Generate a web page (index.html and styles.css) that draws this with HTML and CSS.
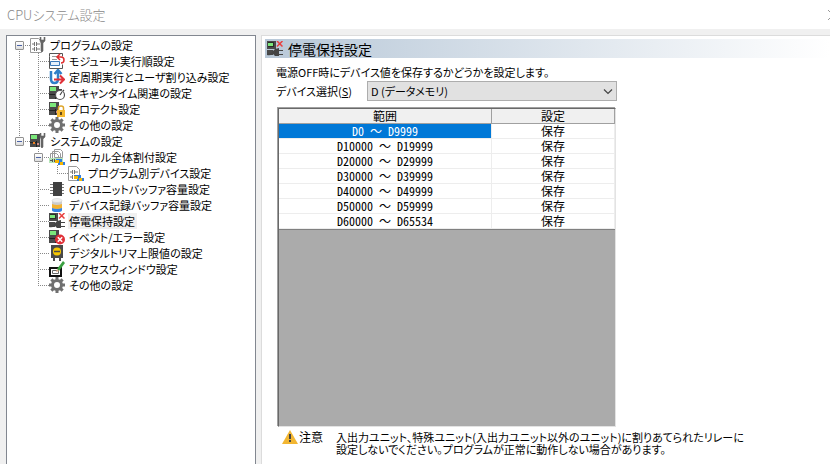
FILE: index.html
```html
<!DOCTYPE html>
<html lang="ja">
<head>
    <meta charset="UTF-8">
    <meta name="viewport" content="width=device-width, initial-scale=1.0">
    <title>CPUシステム設定</title>
    <link rel="stylesheet" href="styles.css">
</head>
<body>

    <!-- Shared icon parts -->
    <svg class="defs" width="0" height="0" aria-hidden="true">
        <symbol id="unit" viewBox="0 0 16 16">
            <path d="M0 1h10v13H0z" fill="#4a4a4a"/>
            <path d="M6 8h1v6H6zM0 9h6v1H0z" fill="#222"/>
            <path d="M1 2h6v4H1z" fill="#7be87b"/>
            <path d="M7 10h2v2H7z" fill="#c88"/>
        </symbol>
        <symbol id="wrench" viewBox="0 0 16 16">
            <path d="M10 0v4l1 2v8q1 2 2 0V6l2-2V0h-1v3h-3V0z" fill="#666" stroke="#666" stroke-width=".6"/>
        </symbol>
        <symbol id="ladder" viewBox="0 0 16 16">
            <path d="M.5 1.500h8l3 3v11H.5z" fill="#fff" stroke="#999"/>
            <path d="M2 7h2m3 0h3M4.500 5v4m2-4v4M2 12h2m3 0h3M4.500 10v4m2-4v4" fill="none" stroke="#777"/>
        </symbol>
        <symbol id="gear" viewBox="0 0 16 16">
            <path d="M6.500 0h3v2.200l1.500.6L12.600 1.300l2.100 2.100L13.200 5l.6 1.500H16v3h-2.200l-.6 1.500 1.500 1.600-2.100 2.100-1.600-1.500-1.500.6V16h-3v-2.200L5 13.200l-1.600 1.500-2.100-2.100L2.800 11l-.6-1.500H0v-3h2.200L2.800 5 1.300 3.400l2.100-2.100L5 2.800l1.500-.6zM8 5a3 3 0 1 0 0 6 3 3 0 0 0 0-6z" fill="#707070" fill-rule="evenodd"/>
        </symbol>
        <symbol id="flow" viewBox="0 0 16 16">
            <path d="M7 10h6v3h3v3H9v-3H7z" fill="#2f7fe0"/>
            <path d="M6 11h4v3H6zM11 13h3v3h-3z" fill="#f7b500"/>
        </symbol>
        <symbol id="power" viewBox="0 0 16 16">
            <path d="M0 0h9v8H0zM0 9h6v5H0z" fill="#4a4a4a"/>
            <path d="M1 1h6v5H1z" fill="#2c2c2c"/>
            <path d="M1 2h5v3H1z" fill="#7be87b"/>
            <path d="M10 0l5.500 5.500M15.500 0L10 5.500" stroke="#e84040" stroke-width="1.500"/>
            <path d="M0 13q4 0 6-3l2-2 4-1v2h4v1h-4v3h4v1h-4v1H8l-2-2q-3 2-6 1z" fill="#444"/>
        </symbol>
    </svg>

    <header class="titlebar">
        <h1>CPUシステム設定</h1>
        <button class="close" type="button" aria-label="閉じる">
            <svg viewBox="0 0 10 10"><path d="M0 0l10 10M10 0L0 10" stroke="#999"/></svg>
        </button>
    </header>

    <div class="content">
        <nav class="tree">
            <ul>
                <li>
                    <div class="row">
                        <button class="toggle" type="button" aria-label="折りたたむ"></button>
                        <svg class="icon" viewBox="0 0 16 16"><use href="#ladder"/><use href="#wrench"/></svg>
                        <span class="label">プログラムの設定</span>
                    </div>
                    <ul>
                        <li><div class="row">
                            <svg class="icon" viewBox="0 0 16 16">
                                <path d="M.5 3.500V.5h13v3m0 8v4H.5v-12" fill="#fff" stroke="#555"/>
                                <path d="M3 3.500h5m-5 3h5" stroke="#999"/>
                                <path d="M1.500 8.500h9v4h-9z" fill="#e5effa" stroke="#3b78b8"/>
                                <path d="M9 4h3q3 0 3 3t-3 3M11 1L8 4l3 3" fill="none" stroke="#e03030" stroke-width="1.500"/>
                            </svg>
                            <span class="label">モジュール実行順設定</span>
                        </div></li>
                        <li><div class="row">
                            <svg class="icon" viewBox="0 0 16 16">
                                <path d="M2 2v8q0 4 3.500 4T9 10V3M5.500 5L9 1l3.500 4" fill="none" stroke="#2f7fc8" stroke-width="2.500"/>
                                <path d="M5 10.500h10M11 6.500l4 4-4 4" fill="none" stroke="#e03038" stroke-width="2"/>
                            </svg>
                            <span class="label">定周期実行とユーザ割り込み設定</span>
                        </div></li>
                        <li><div class="row">
                            <svg class="icon" viewBox="0 0 16 16">
                                <use href="#unit"/>
                                <circle cx="11" cy="10" r="4.500" fill="#fff" stroke="#555" stroke-width="1.200"/>
                                <path d="M11 10l2-3M9 4.500h4M14 5l1 1" stroke="#444" stroke-width="1.200"/>
                            </svg>
                            <span class="label">スキャンタイム関連の設定</span>
                        </div></li>
                        <li><div class="row">
                            <svg class="icon" viewBox="0 0 16 16">
                                <use href="#unit"/>
                                <path d="M9.500 9V7q0-2 2.500-2t2.500 2v2" fill="none" stroke="#dda52a" stroke-width="1.500"/>
                                <path d="M8 9h8v7H8z" fill="#f5b82e"/>
                                <path d="M11 11h2v3h-2z" fill="#654b18"/>
                            </svg>
                            <span class="label">プロテクト設定</span>
                        </div></li>
                        <li><div class="row">
                            <svg class="icon" viewBox="0 0 16 16"><use href="#gear"/></svg>
                            <span class="label">その他の設定</span>
                        </div></li>
                    </ul>
                </li>
                <li>
                    <div class="row">
                        <button class="toggle" type="button" aria-label="折りたたむ"></button>
                        <svg class="icon" viewBox="0 0 16 16">
                            <use href="#unit"/>
                            <path d="M3 9h2v2H3z" fill="#f08020"/>
                            <use href="#wrench"/>
                        </svg>
                        <span class="label">システムの設定</span>
                    </div>
                    <ul>
                        <li>
                            <div class="row">
                                <button class="toggle" type="button" aria-label="折りたたむ"></button>
                                <svg class="icon" viewBox="0 0 16 16">
                                    <path d="M5.500.5h6l2 2v6h-8zM3.500 2.500h6l2 2v5h-8zM1.500 4.500h6l2 2v3h-8z" fill="#fff" stroke="#999"/>
                                    <path d="M0 9h14v5H0z" fill="#b5e5b8"/>
                                    <path d="M1 11.500h2m3 0h2M3.500 10v3m2-3v3" stroke="#555"/>
                                    <use href="#flow"/>
                                </svg>
                                <span class="label">ローカル全体割付設定</span>
                            </div>
                            <ul>
                                <li><div class="row">
                                    <svg class="icon" viewBox="0 0 16 16"><use href="#ladder"/><use href="#flow"/></svg>
                                    <span class="label">プログラム別デバイス設定</span>
                                </div></li>
                            </ul>
                        </li>
                        <li><div class="row">
                            <svg class="icon" viewBox="0 0 16 16">
                                <path d="M1 3.500h14M1 6.500h14M1 9.500h14M1 12.500h14" stroke="#777"/>
                                <path d="M4 1h9v14H4z" fill="#404040"/>
                            </svg>
                            <span class="label">CPUユニットバッファ容量設定</span>
                        </div></li>
                        <li><div class="row">
                            <svg class="icon" viewBox="0 0 16 16">
                                <path d="M3 3v10q0 2 5 2t5-2V3z" fill="#ccc"/>
                                <path d="M3 7q5 2 10 0v4q-5 2-10 0z" fill="#f2b233"/>
                                <path d="M3 11q5 2 10 0v2q0 2-5 2t-5-2z" fill="#3584e4"/>
                                <ellipse cx="8" cy="3.500" rx="5" ry="2" fill="#eee" stroke="#ccc" stroke-width=".5"/>
                            </svg>
                            <span class="label">デバイス記録バッファ容量設定</span>
                        </div></li>
                        <li><div class="row">
                            <svg class="icon" viewBox="0 0 16 16"><use href="#power"/></svg>
                            <span class="label selected">停電保持設定</span>
                        </div></li>
                        <li><div class="row">
                            <svg class="icon" viewBox="0 0 16 16">
                                <use href="#unit"/>
                                <circle cx="11" cy="10.500" r="5" fill="#e03038"/>
                                <path d="M8.800 8.300l4.400 4.400m0-4.400l-4.400 4.400" stroke="#fff" stroke-width="1.500"/>
                            </svg>
                            <span class="label">イベント/エラー設定</span>
                        </div></li>
                        <li><div class="row">
                            <svg class="icon" viewBox="0 0 16 16">
                                <path d="M2 0h12v13H2zM4 13h2v3H4zM10 13h2v3h-2z" fill="#4a4a4a"/>
                                <circle cx="8" cy="6.500" r="4" fill="#f8c800"/>
                                <path d="M5 6.500h6" stroke="#4a4a4a" stroke-width="1.500"/>
                            </svg>
                            <span class="label">デジタルトリマ上限値の設定</span>
                        </div></li>
                        <li><div class="row">
                            <svg class="icon" viewBox="0 0 16 16">
                                <path d="M1 7h11v8H1z" fill="#fff" stroke="#111" stroke-width="2"/>
                                <path d="M3.500 12.500h6v-3h-6z" fill="none" stroke="#666"/>
                                <path d="M8 8l6-8 2 2-6 8z" fill="#3aa040"/>
                                <path d="M7 11l1-3 2 2z" fill="#e0a888"/>
                            </svg>
                            <span class="label">アクセスウィンドウ設定</span>
                        </div></li>
                        <li><div class="row">
                            <svg class="icon" viewBox="0 0 16 16"><use href="#gear"/></svg>
                            <span class="label">その他の設定</span>
                        </div></li>
                    </ul>
                </li>
            </ul>
        </nav>

        <main class="panel">
            <h2 class="banner">
                <svg class="icon" viewBox="0 0 16 16"><use href="#power"/></svg>
                停電保持設定
            </h2>

            <div class="settings">
                <p class="description">電源OFF時にデバイス値を保存するかどうかを設定します。</p>

                <div class="field">
                    <label for="device">デバイス選択(<u>S</u>)</label>
                    <div class="select-box">
                        <select id="device" name="device">
                            <option>D (データメモリ)</option>
                        </select>
                        <svg class="chevron" viewBox="0 0 10 6"><path d="M1 .5l4 4 4-4" fill="none" stroke="#444" stroke-width="1.200"/></svg>
                    </div>
                </div>

                <div class="grid">
                    <table>
                        <thead>
                            <tr><th class="range">範囲</th><th>設定</th></tr>
                        </thead>
                        <tbody>
                            <tr><td class="current">D0 <span class="wave">～</span> D9999</td><td>保存</td></tr>
                            <tr><td>D10000 <span class="wave">～</span> D19999</td><td>保存</td></tr>
                            <tr><td>D20000 <span class="wave">～</span> D29999</td><td>保存</td></tr>
                            <tr><td>D30000 <span class="wave">～</span> D39999</td><td>保存</td></tr>
                            <tr><td>D40000 <span class="wave">～</span> D49999</td><td>保存</td></tr>
                            <tr><td>D50000 <span class="wave">～</span> D59999</td><td>保存</td></tr>
                            <tr><td>D60000 <span class="wave">～</span> D65534</td><td>保存</td></tr>
                        </tbody>
                    </table>
                </div>

                <div class="notice">
                    <svg class="icon" viewBox="0 0 16 16">
                        <path d="M8 1l8 14H0z" fill="#f2b632"/>
                        <path d="M7 5h2v5H7zM7 11h2v2H7z" fill="#444"/>
                    </svg>
                    <strong>注意</strong>
                    <p>入出力ユニット、特殊ユニット(入出力ユニット以外のユニット)に割りあてられたリレーに<br>設定しないでください。プログラムが正常に動作しない場合があります。</p>
                </div>
            </div>
        </main>
    </div>

</body>
</html>
```

FILE: styles.css
```css
* {
    box-sizing: border-box;
}

body {
    display: flex;
    flex-direction: column;
    height: 100vh;
    margin: 0;
    overflow: hidden;
    background-color: #f0f0f0;
    color: #000;
    font-family: "Noto Sans CJK JP", sans-serif;
    font-size: 11px;
    line-height: 16px;
    font-feature-settings: "palt";
}

h1, h2, p, ul {
    margin: 0;
    padding: 0;
    font-weight: normal;
}

.defs {
    position: absolute;
}

.icon {
    flex: none;
    width: 16px;
    height: 16px;
}

/* Title bar */
.titlebar {
    display: flex;
    flex: none;
    align-items: center;
    justify-content: space-between;
    height: 29px;
    padding-left: 7px;
    background-color: #fff;
}

.titlebar h1 {
    color: #888;
    font-size: 13px;
    font-weight: 300;
}

.close {
    flex: none;
    width: 10px;
    height: 10px;
    margin-right: -8px;
    padding: 0;
    border: none;
    background: none;
}

.close svg {
    display: block;
}

.content {
    display: flex;
    flex: 1;
    gap: 5px;
    min-height: 0;
    padding: 6px 0 0 6px;
}

/* Settings tree */
.tree {
    flex: none;
    width: 250px;
    padding: 1px 0 0 8px;
    border: 1px solid #828790;
    border-bottom: none;
    background-color: #fff;
}

.tree ul {
    list-style: none;
}

.tree li {
    background: repeating-linear-gradient(#888 0 1px, transparent 1px 2px) 4px 0 / 1px 100% no-repeat;
}

.tree li:last-child {
    background-size: 1px 8px;
}

.tree > ul > li:first-child {
    background-position: 4px 8px;
}

.tree li ul {
    padding-left: 19px;
}

.row {
    display: flex;
    align-items: center;
    height: 16px;
    padding-left: 15px;
    background: repeating-linear-gradient(90deg, #888 0 1px, transparent 1px 2px) 4px 8px / 11px 1px no-repeat;
}

.toggle {
    flex: none;
    width: 9px;
    height: 9px;
    margin: 0 6px 0 -15px;
    padding: 0;
    border: 1px solid #919191;
    border-radius: 1px;
    background: linear-gradient(#4b63a7, #4b63a7) 1px 3px / 5px 1px no-repeat, linear-gradient(#fff, #ddd);
}

.label {
    margin-left: 3px;
    padding: 0 2px 0 1px;
    white-space: nowrap;
}

.selected {
    background-color: #f0f0f0;
}

/* Right panel */
.panel {
    display: flex;
    flex: 1;
    flex-direction: column;
    min-width: 0;
    padding: 3px 0 0 3px;
    border: 1px solid #dcdcdc;
    border-width: 1px 0 0 1px;
    background-color: #fff;
}

.banner {
    display: flex;
    align-items: center;
    gap: 5px;
    height: 19px;
    padding-left: 2px;
    background: linear-gradient(90deg, #b8c8d8, #fff);
    font-size: 14px;
}

.settings {
    display: flex;
    flex: 1;
    flex-direction: column;
    min-height: 0;
    padding: 6px 12px 9px 11px;
}

.field {
    display: flex;
    align-items: center;
    margin: 1px 0 7px;
}

.field label {
    width: 91px;
}

.select-box {
    position: relative;
    width: 250px;
}

.select-box select {
    display: block;
    width: 100%;
    height: 20px;
    padding: 0 3px;
    border: 1px solid #adadad;
    border-radius: 0;
    appearance: none;
    background-color: #e1e1e1;
    color: #000;
    font: inherit;
    font-feature-settings: inherit;
}

.chevron {
    position: absolute;
    top: 8px;
    right: 4px;
    width: 10px;
    height: 6px;
    pointer-events: none;
}

/* Range list */
.grid {
    flex: 1;
    width: 338px;
    min-height: 0;
    margin-left: 2px;
    border: 1px solid #696969;
    border-right-color: #e3e3e3;
    border-bottom-color: #e3e3e3;
    background-color: #ababab;
    box-shadow: -1px -1px #a0a0a0;
}

table {
    width: 100%;
    border-collapse: separate;
    border-spacing: 0;
    table-layout: fixed;
    border-bottom: 1px solid #808080;
    background-color: #fff;
    font-size: 12px;
    line-height: 14px;
    font-feature-settings: "hwid";
}

th, td {
    padding: 0;
    border: 1px solid #ededed;
    border-width: 0 1px 1px 0;
    font-weight: normal;
    text-align: center;
}

th {
    border-color: #a0a0a0;
    background-color: #f0f0f0;
}

.range {
    width: 213px;
}

.current {
    background-color: #0078d7;
    color: #fff;
}

.wave {
    font-feature-settings: normal;
}

/* Warning */
.notice {
    display: flex;
    padding: 2px 0 0 6px;
    line-height: 12px;
}

.notice strong {
    width: 37px;
    margin-left: 1px;
    font-size: 12px;
    font-weight: normal;
    line-height: 16px;
}

.notice p {
    padding-top: 2px;
    white-space: nowrap;
}
```
